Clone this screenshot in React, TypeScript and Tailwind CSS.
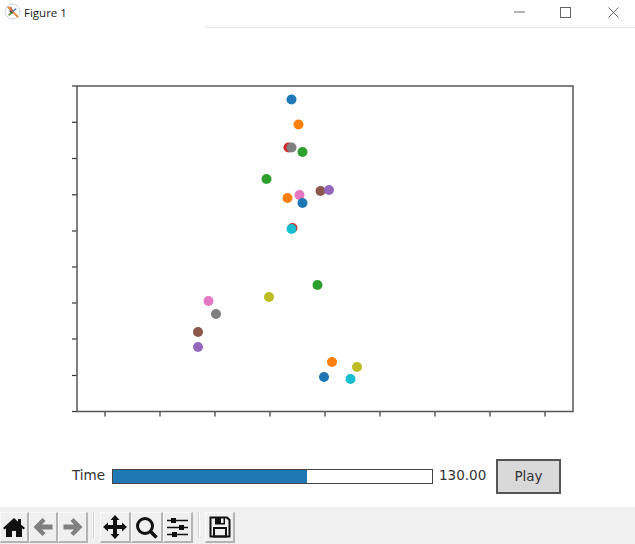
import React from 'react'

const C = {
  blue: '#1f77b4', orange: '#ff7f0e', green: '#2ca02c', red: '#d62728', purple: '#9467bd',
  brown: '#8c564b', pink: '#e377c2', gray: '#7f7f7f', olive: '#bcbd22', cyan: '#17becf',
}

const points: [number, number, string][] = [
  [291.5, 99.5, C.blue], [298.5, 124.5, C.orange], [288.5, 147.5, C.red], [291.5, 147.5, C.gray], [302.5, 152, C.green],
  [266.5, 179, C.green], [320.5, 191, C.brown], [329, 190, C.purple], [299.5, 195, C.pink], [287.5, 198, C.orange],
  [302.5, 203, C.blue], [292.5, 228, C.red], [291.5, 229, C.cyan], [317.5, 285, C.green], [269, 297, C.olive],
  [208.5, 301, C.pink], [216, 314, C.gray], [198, 332, C.brown], [198, 347, C.purple], [332, 362, C.orange],
  [357, 367, C.olive], [324, 377, C.blue], [350.5, 379, C.cyan],
]

const xTicks = [105, 160, 215, 270, 325, 380, 435, 490, 545]
const yTicks = [86, 122.3, 158.5, 194.8, 231, 267, 303, 339, 375.5, 411.5]

const ToolButton = ({ w, children }: { w: string; children: React.ReactNode }) => (
  <div className={`${w} h-[31px] flex items-center justify-center border-r-2 border-b-2 border-[#b4b4b4] border-t border-l border-t-[#fafafa] border-l-[#fafafa]`}>
    {children}
  </div>
)

const Sep = () => <div className="w-[2px] h-[26px] mx-[5px] bg-[#d2d2d2] border-r border-white" />

export default function App() {
  return (
    <div className="w-[635px] h-[544px] bg-white flex flex-col overflow-hidden font-['Liberation_Sans',sans-serif]">
      {/* title bar */}
      <div className="h-[28px] flex items-start relative shrink-0">
        <svg width="17" height="17" viewBox="0 0 18 18" className="ml-[4px] mt-[3px]">
          <circle cx="9" cy="9" r="7.8" fill="#fff" stroke="#8fb4cf" strokeWidth="1" strokeDasharray="1.5 1" />
          <path d="M4 4L15 15" stroke="#e08a3c" strokeWidth="2" />
          <path d="M9 9L5 13" stroke="#6f9e4a" strokeWidth="2" />
          <path d="M9 9L7 4" stroke="#c9574a" strokeWidth="1.5" />
          <path d="M9 9L13 6" stroke="#4a7fb0" strokeWidth="1.5" />
          <path d="M6 8L9 11" stroke="#444" strokeWidth="1.5" />
        </svg>
        <span className="ml-[3px] mt-[5px] text-[11.5px] leading-[16px] text-[#1a1a1a] font-['Open_Sans',sans-serif]">Figure 1</span>
        <div className="absolute left-[205px] right-0 bottom-0 h-[1px] bg-[#e8e8e8]" />
        <div className="ml-auto flex items-center h-[24px]">
          <svg width="11" height="12" viewBox="0 0 11 12" className="mr-[35px]">
            <path d="M0 6H11" stroke="#666" strokeWidth="1" />
          </svg>
          <svg width="11" height="11" viewBox="0 0 11 11" className="mr-[37px]">
            <rect x="0.5" y="0.5" width="10" height="10" fill="none" stroke="#666" strokeWidth="1" />
          </svg>
          <svg width="11" height="11" viewBox="0 0 11 11" className="mr-[16px]">
            <path d="M0.5 0.5L10.5 10.5M10.5 0.5L0.5 10.5" stroke="#666" strokeWidth="1" />
          </svg>
        </div>
      </div>

      {/* chart: svg coordinates are page coordinates, shifted by the title bar */}
      <svg width="635" height="396" viewBox="0 28 635 396" className="shrink-0 block">
        {xTicks.map(x => <line key={x} x1={x} x2={x} y1={411.5} y2={416.5} stroke="#333" strokeWidth="1.2" />)}
        {yTicks.map(y => <line key={y} x1={72} x2={77} y1={y} y2={y} stroke="#333" strokeWidth="1.2" />)}
        <rect x="77" y="86" width="496" height="325.5" fill="#fff" stroke="#555" strokeWidth="1.5" />
        {points.map(([x, y, c], i) => <circle key={i} cx={x} cy={y} r="5" fill={c} />)}
      </svg>

      {/* slider row */}
      <div className="h-[83px] shrink-0 flex items-start">
        <span className="ml-[72px] mt-[42px] w-[40px] text-[13.5px] leading-[18px] text-[#333] font-['DejaVu_Sans',sans-serif]">Time</span>
        <div className="mt-[45px] w-[321px] h-[15px] border border-[#444] bg-white">
          <div className="w-[194px] h-full bg-[#1f77b4]" />
        </div>
        <span className="ml-[6px] mt-[42px] w-[57px] text-[13.5px] leading-[18px] text-[#333] font-['DejaVu_Sans',sans-serif]">130.00</span>
        <button className="mt-[35px] w-[65px] h-[35px] bg-[#d9d9d9] border-2 border-[#555] text-[13.5px] text-[#333] font-['DejaVu_Sans',sans-serif]">Play</button>
      </div>

      {/* toolbar */}
      <div className="flex-1 bg-[#f0f0f0] flex items-start pt-[5px]">
        <ToolButton w="w-[29px]">
          <svg width="22" height="20" viewBox="0 0 22 20">
            <path d="M11 1L0 11l1.500 1.500L3 11.300V20h6v-6h4v6h6v-8.700l1.500 1.200L22 11l-4-3.600V2h-3v2.700z" fill="#111" />
          </svg>
        </ToolButton>
        <ToolButton w="w-[29px]">
          <svg width="20" height="20" viewBox="0 0 20 20">
            <path d="M0.500 10l9-9 3 3-3.500 3.500H19.500v5H9l3.500 3.500-3 3z" fill="#808080" />
          </svg>
        </ToolButton>
        <ToolButton w="w-[30px]">
          <svg width="20" height="20" viewBox="0 0 20 20">
            <path d="M19.500 10l-9-9-3 3 3.500 3.500H0.500v5H11l-3.500 3.500 3 3z" fill="#808080" />
          </svg>
        </ToolButton>
        <Sep />
        <ToolButton w="w-[31px]">
          <svg width="24" height="24" viewBox="0 0 24 24">
            <path d="M12 0l4.500 5H14v5h5V7.500l5 4.500-5 4.500V14h-5v5h2.500L12 24l-4.500-5H10v-5H5v2.500L0 12l5-4.500V10h5V5H7.500z" fill="#111" />
          </svg>
        </ToolButton>
        <ToolButton w="w-[32px]">
          <svg width="23" height="23" viewBox="0 0 23 23">
            <circle cx="10" cy="10" r="7.5" fill="none" stroke="#111" strokeWidth="3" />
            <path d="M15.500 15.500l6 6" stroke="#111" strokeWidth="3.5" />
          </svg>
        </ToolButton>
        <ToolButton w="w-[30px]">
          <svg width="21" height="21" viewBox="0 0 21 21">
            <path d="M0 3.500H21M0 10.500H21M0 17.500H21" stroke="#111" strokeWidth="1.5" />
            <rect x="4" y="1" width="5" height="5" fill="#111" />
            <rect x="12" y="8" width="5" height="5" fill="#111" />
            <rect x="5" y="15" width="5" height="5" fill="#111" />
          </svg>
        </ToolButton>
        <Sep />
        <ToolButton w="w-[30px]">
          <svg width="22" height="22" viewBox="0 0 22 22">
            <path d="M1.500 1.500H18L20.500 4V20.500H1.500z" fill="none" stroke="#111" strokeWidth="2" />
            <rect x="6" y="1.500" width="10" height="7" fill="#111" />
            <rect x="12" y="2.500" width="2.500" height="4.500" fill="#f0f0f0" />
            <rect x="5" y="12" width="12" height="8.500" fill="none" stroke="#111" strokeWidth="2" />
          </svg>
        </ToolButton>
      </div>
    </div>
  )
}
